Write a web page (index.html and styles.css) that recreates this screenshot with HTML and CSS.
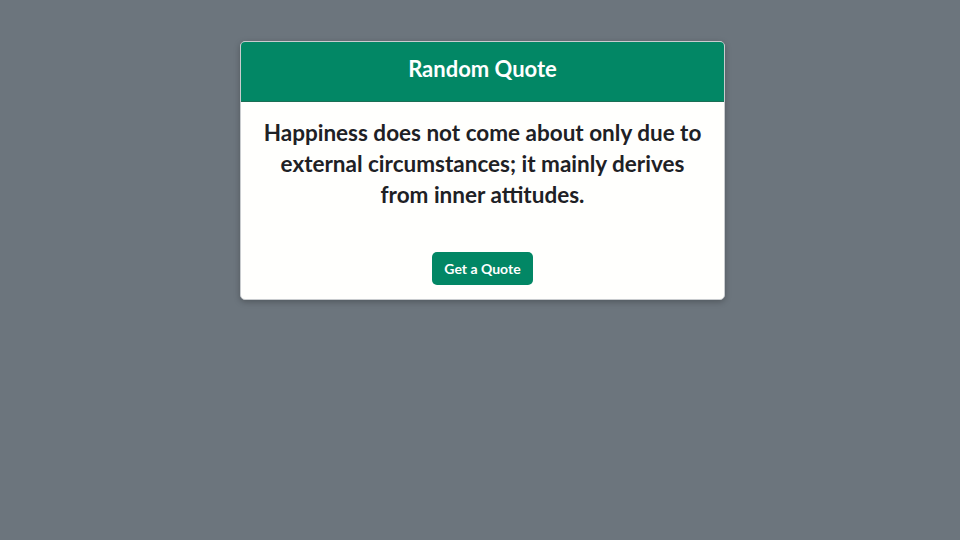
FILE: index.html
```html
<!DOCTYPE html>
<html>
<head>
<meta charset="utf-8">
<link rel="stylesheet" href="styles.css">
</head>
<body>
<div class="card">
  <div class="card-header"><h2 class="title">Random Quote</h2></div>
  <div class="card-body">
    <p class="quote">Happiness does not come about only due to external circumstances; it mainly derives from inner attitudes.</p>
    <button class="btn">Get a Quote</button>
  </div>
</div>
</body>
</html>
```
FILE: styles.css
```css
html, body { margin: 0; padding: 0; }
body {
  background: #6c757d;
  font-family: "Lato", "Open Sans", sans-serif;
  width: 960px;
  height: 540px;
  overflow: hidden;
}
.card {
  margin: 41px 0 0 240px;
  width: 483px;
  background: #fffffd;
  border: 1px solid #c9cccf;
  border-radius: 5px;
  box-shadow: 0 2px 6px rgba(0,0,0,0.25);
  overflow: hidden;
}
.card-header {
  background: #028765;
  height: 60px;
  box-sizing: border-box;
  padding-bottom: 6px;
  display: flex;
  align-items: center;
  justify-content: center;
  border-bottom: 1px solid #1b6e55;
}
.title {
  margin: 0;
  color: #fff;
  font-size: 22px;
  font-weight: 700;
}
.card-body {
  display: flex;
  flex-direction: column;
  align-items: center;
  padding: 15px 16px 14px;
}
.quote {
  margin: 0 0 42px;
  color: #1e2125;
  font-size: 22.5px;
  font-weight: 700;
  line-height: 31px;
  text-align: center;
}
.btn {
  background: #028765;
  color: #fff;
  border: 0;
  border-radius: 5px;
  font-family: inherit;
  font-size: 14px;
  font-weight: 700;
  height: 33px;
  padding: 0 12px;
}
```
